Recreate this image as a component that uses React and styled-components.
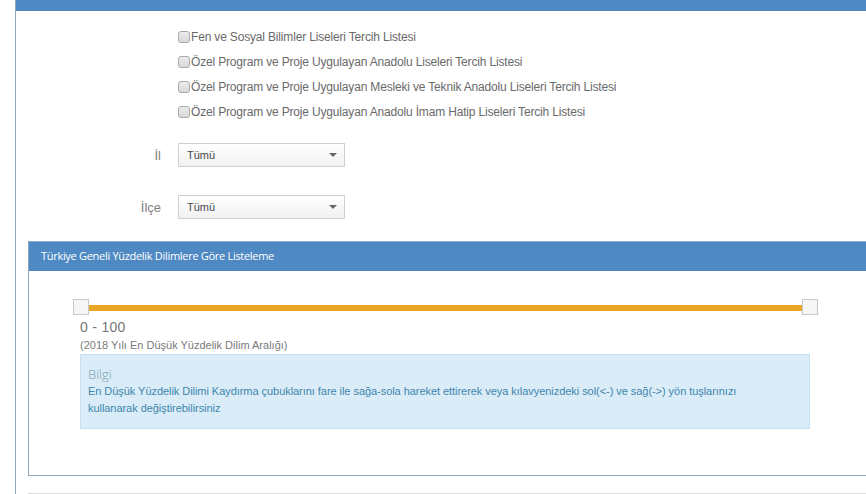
import React from "react";
import styled, { createGlobalStyle } from "styled-components";

const GlobalStyle = createGlobalStyle`
  html, body {
    margin: 0;
    padding: 0;
    background: #ffffff;
    overflow: hidden;
  }
  body {
    font-family: "Liberation Sans", Arial, sans-serif;
    color: #666;
  }
`;

const OuterPanel = styled.div`
  margin-left: 15px;
  height: 100vh;
  overflow: hidden;
  border-left: 1px solid #8ea7ba;
`;

const OuterHeader = styled.div`
  height: 11px;
  background: #4f89c3;
`;

const OuterBody = styled.div`
  padding-left: 12px;
`;

const CheckList = styled.ul`
  list-style: none;
  margin: 13px 0 0 0;
  padding: 0 0 0 150px;
`;

const CheckRow = styled.li`
  height: 25px;
  display: flex;
  align-items: center;
  gap: 1px;
  font-size: 12px;
  letter-spacing: -0.17px;
  color: #6a6a6a;
`;

const Box = styled.span`
  box-sizing: border-box;
  width: 12px;
  height: 12px;
  border: 1px solid #ababab;
  border-radius: 3px;
  background: linear-gradient(#ececec, #d9d9d9);
  flex: none;
`;

const FieldRow = styled.div`
  display: grid;
  grid-template-columns: 133px 167px;
  column-gap: 17px;
  align-items: center;
  margin-top: ${(p) => p.$top}px;
`;

const FieldLabel = styled.label`
  text-align: right;
  font-size: 13px;
  color: #808080;
`;

const SelectBox = styled.div`
  box-sizing: border-box;
  height: 24px;
  border: 1px solid #d0d0d0;
  background: linear-gradient(#ffffff, #f1f1f1);
  display: flex;
  align-items: center;
  justify-content: space-between;
  padding: 0 7px 0 8px;
  font-size: 11px;
  color: #4a4a4a;
`;

const Caret = styled.span`
  width: 0;
  height: 0;
  border-left: 4px solid transparent;
  border-right: 4px solid transparent;
  border-top: 4px solid #666;
`;

const InnerPanel = styled.section`
  margin-top: 22px;
  border-left: 1px solid #8ea7ba;
  border-bottom: 1px solid #8ea7ba;
`;

const InnerHeader = styled.h3`
  margin: 0;
  height: 30px;
  box-sizing: border-box;
  border-top: 1px solid #8cb0d6;
  background: #4f89c3;
  color: #ffffff;
  font-family: "Open Sans", "Liberation Sans", sans-serif;
  font-weight: 400;
  font-size: 11px;
  letter-spacing: -0.3px;
  line-height: 28px;
  padding-left: 12px;
`;

const InnerBody = styled.div`
  width: 730px;
  padding: 34px 0 46px 51px;
`;

const Slider = styled.div`
  position: relative;
  height: 6px;
  background: #e8a526;
`;

const Handle = styled.span`
  position: absolute;
  top: -6px;
  left: ${(p) => (p.$end ? "calc(100% - 8px)" : "-7px")};
  box-sizing: border-box;
  width: 16px;
  height: 16px;
  border: 1px solid #c8c8c8;
  background: #f6f6f6;
`;

const RangeValue = styled.div`
  margin-top: 8px;
  font-size: 14px;
  letter-spacing: 0.3px;
  line-height: 16px;
  color: #777;
`;

const RangeCaption = styled.div`
  margin-top: 3px;
  font-size: 11px;
  line-height: 14px;
  color: #7a7a7a;
`;

const InfoBox = styled.div`
  margin-top: 2px;
  box-sizing: border-box;
  height: 75px;
  background: #d9ecf7;
  border: 1px solid #c4e2f1;
  padding: 10px 8px 0 7px;
`;

const InfoTitle = styled.div`
  font-family: "Open Sans", "Liberation Sans", sans-serif;
  font-weight: 300;
  font-size: 13px;
  line-height: 18px;
  color: #7d9fb5;
`;

const InfoText = styled.p`
  margin: 0;
  font-size: 11px;
  letter-spacing: -0.05px;
  line-height: 17px;
  color: #3f86ad;
  max-width: 680px;
`;

const NextPanel = styled.div`
  margin-top: 17px;
  border-top: 1px solid #dadada;
`;

const lists = [
  "Fen ve Sosyal Bilimler Liseleri Tercih Listesi",
  "Özel Program ve Proje Uygulayan Anadolu Liseleri Tercih Listesi",
  "Özel Program ve Proje Uygulayan Mesleki ve Teknik Anadolu Liseleri Tercih Listesi",
  "Özel Program ve Proje Uygulayan Anadolu İmam Hatip Liseleri Tercih Listesi",
];

export default function App() {
  return (
    <>
      <GlobalStyle />
      <OuterPanel>
        <OuterHeader />
        <OuterBody>
          <CheckList>
            {lists.map((t) => (
              <CheckRow key={t}>
                <Box />
                {t}
              </CheckRow>
            ))}
          </CheckList>
          <FieldRow $top={19}>
            <FieldLabel>İl</FieldLabel>
            <SelectBox>
              Tümü
              <Caret />
            </SelectBox>
          </FieldRow>
          <FieldRow $top={28}>
            <FieldLabel>İlçe</FieldLabel>
            <SelectBox>
              Tümü
              <Caret />
            </SelectBox>
          </FieldRow>
          <InnerPanel>
            <InnerHeader>Türkiye Geneli Yüzdelik Dilimlere Göre Listeleme</InnerHeader>
            <InnerBody>
              <Slider>
                <Handle />
                <Handle $end />
              </Slider>
              <RangeValue>0 - 100</RangeValue>
              <RangeCaption>(2018 Yılı En Düşük Yüzdelik Dilim Aralığı)</RangeCaption>
              <InfoBox>
                <InfoTitle>Bilgi</InfoTitle>
                <InfoText>
                  En Düşük Yüzdelik Dilimi Kaydırma çubuklarını fare ile sağa-sola hareket ettirerek veya kılavyenizdeki sol(&lt;-) ve sağ(-&gt;) yön tuşlarınızı kullanarak değiştirebilirsiniz
                </InfoText>
              </InfoBox>
            </InnerBody>
          </InnerPanel>
          <NextPanel />
        </OuterBody>
      </OuterPanel>
    </>
  );
}
